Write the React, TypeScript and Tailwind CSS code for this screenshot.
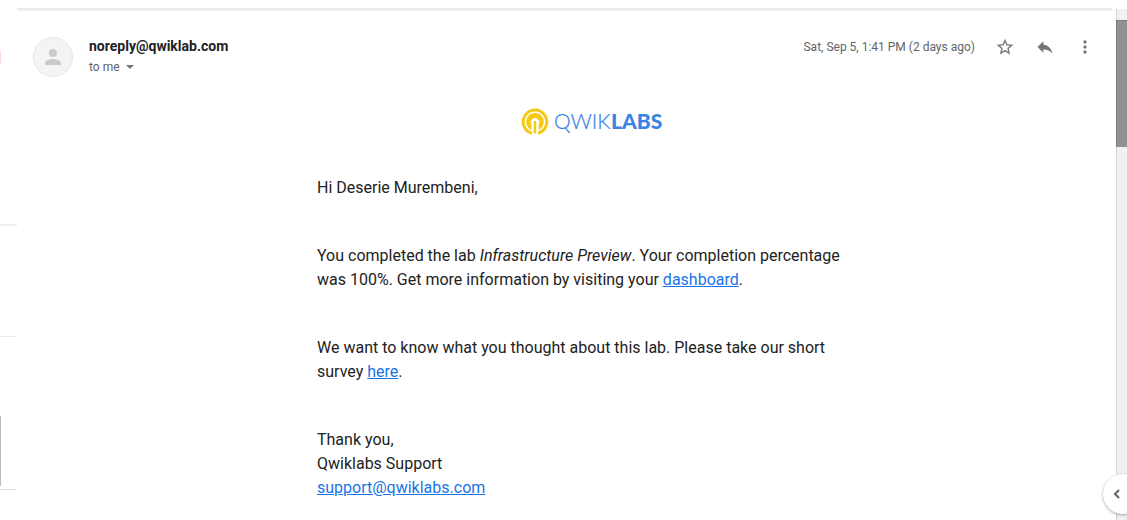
import type { ReactNode } from "react";

function IconButton({ label, children }: { label: string; children: ReactNode }) {
  return (
    <button type="button" aria-label={label} className="flex size-5 items-center justify-center text-[#757575]">
      <svg viewBox="0 0 24 24" className="size-5" fill="currentColor" aria-hidden="true">
        {children}
      </svg>
    </button>
  );
}

function Logo() {
  return (
    <svg viewBox="0 0 142 28" className="mx-auto h-7 w-[142px]" role="img" aria-label="Qwiklabs">
      <path d="M11 25.2A11.8 11.8 0 1 1 17 25.2" fill="none" stroke="#f5ca14" strokeWidth="3" />
      <path
        d="M10.4 21.8A8.8 8.8 0 1 1 17.6 21.8V16.4A4.2 4.2 0 1 0 10.4 16.4Z"
        fill="#f5ca14"
      />
      <path d="M14 13V25.5" stroke="#f5ca14" strokeWidth="2.4" />
      <text x="33" y="21" fontFamily="Lato, sans-serif" fontSize="21" fontWeight="300" fill="#3b83e3" stroke="#3b83e3" strokeWidth="0.2">
        QWIK
      </text>
      <text x="90" y="21" fontFamily="Lato, sans-serif" fontSize="21" fontWeight="900" fill="#3b83e3">
        LABS
      </text>
    </svg>
  );
}

function MessageHeader() {
  return (
    <header className="flex items-start pr-[21px] pl-4">
      <span className="flex size-10 shrink-0 items-center justify-center rounded-full border border-[#e6e6e6] bg-[#f4f4f4] text-[#cacaca]">
        <svg viewBox="0 0 24 24" className="size-6" fill="currentColor" aria-hidden="true">
          <path d="M12 12a4 4 0 1 0 0-8 4 4 0 0 0 0 8zm0 2c-2.67 0-8 1.34-8 4v2h16v-2c0-2.66-5.33-4-8-4z" />
        </svg>
      </span>
      <div className="ml-4 grow">
        <h1 className="text-[14px] leading-[18px] font-bold text-[#202124]">noreply@qwiklab.com</h1>
        <button type="button" className="mt-0.5 flex items-center gap-1.5 text-[12px] leading-5 text-[#5f6368]">
          to me
          <svg viewBox="0 0 8 4" className="h-1 w-2" fill="#757575" aria-hidden="true">
            <path d="M0 0h8L4 4z" />
          </svg>
        </button>
      </div>
      <div className="flex h-5 shrink-0 items-center gap-5">
        <time className="text-[12px] leading-5 text-[#5f6368]">Sat, Sep 5, 1:41 PM (2 days ago)</time>
        <IconButton label="Star">
          <path d="M22 9.24l-7.19-.62L12 2 9.19 8.63 2 9.24l5.46 4.73L5.82 21 12 17.27 18.18 21l-1.63-7.03L22 9.24zM12 15.4l-3.76 2.27 1-4.28-3.32-2.88 4.38-.38L12 6.1l1.71 4.04 4.38.38-3.32 2.88 1 4.28L12 15.4z" />
        </IconButton>
        <IconButton label="Reply">
          <path d="M10 9V5l-7 7 7 7v-4.1c5 0 8.5 1.6 11 5.1-1-5-4-10-11-11z" />
        </IconButton>
        <IconButton label="More">
          <path d="M12 8a2 2 0 1 0 0-4 2 2 0 0 0 0 4zm0 2a2 2 0 1 0 0 4 2 2 0 0 0 0-4zm0 6a2 2 0 1 0 0 4 2 2 0 0 0 0-4z" />
        </IconButton>
      </div>
    </header>
  );
}

function BodyLink({ href, children }: { href: string; children: ReactNode }) {
  return (
    <a href={href} className="text-[#1a73e8] underline">
      {children}
    </a>
  );
}

export default function App() {
  return (
    <div className="relative flex min-h-screen overflow-hidden bg-white font-[Roboto,sans-serif]">
      <aside className="flex w-[17px] shrink-0 flex-col">
        <div className="flex h-[226px] items-center border-b-2 border-[#eeeeee]">
          <span className="-mt-[110px] h-3 w-px bg-[#ffdcdc]" />
        </div>
        <div className="h-[111px] border-b border-[#ebebeb]" />
        <div className="flex h-[153px] items-end border-b border-[#e0e0e0] pb-[3px]">
          <span className="h-[70px] w-px bg-[#bdbdbd]" />
        </div>
      </aside>
      <main className="min-w-0 grow pt-2">
        <div className="mr-1 h-[3px] border-b border-[#f5f5f5] bg-[#eaeaea]" />
        <div className="pt-[26px]">
          <MessageHeader />
        </div>
        <article className="pt-[31px] pr-[21px] pl-[72px] text-[16px] leading-6 text-[#222222]">
          <div className="mx-auto max-w-[550px]">
            <Logo />
            <p className="mt-10">Hi Deserie Murembeni,</p>
            <p className="mt-11">
              You completed the lab <em>Infrastructure Preview</em>. Your completion percentage was 100%. Get more
              information by visiting your <BodyLink href="#dashboard">dashboard</BodyLink>.
            </p>
            <p className="mt-11">
              We want to know what you thought about this lab. Please take our short survey{" "}
              <BodyLink href="#survey">here</BodyLink>.
            </p>
            <p className="mt-11">
              Thank you,
              <br />
              Qwiklabs Support
              <br />
              <BodyLink href="mailto:support@qwiklabs.com">support@qwiklabs.com</BodyLink>
            </p>
          </div>
        </article>
      </main>
      <div className="mt-[9px] w-[11px] shrink-0 border-l border-[#d4d4d4] bg-[#f1f1f1] pt-[11px]" aria-hidden="true">
        <div className="-ml-px h-[127px] border-t border-l border-[#7d7d7d] bg-[#919191]" />
      </div>
      <button
        type="button"
        aria-label="Show side panel"
        className="absolute -right-4 bottom-[6px] flex h-10 w-10 items-center rounded-full bg-white pl-2.5 text-[#5f6368] shadow-[0_1px_3px_rgba(60,64,67,0.45)]"
      >
        <svg viewBox="0 0 8 10" className="h-2.5 w-2" fill="none" stroke="currentColor" strokeWidth="2" aria-hidden="true">
          <path d="M6 1L2 5L6 9" />
        </svg>
      </button>
    </div>
  );
}
